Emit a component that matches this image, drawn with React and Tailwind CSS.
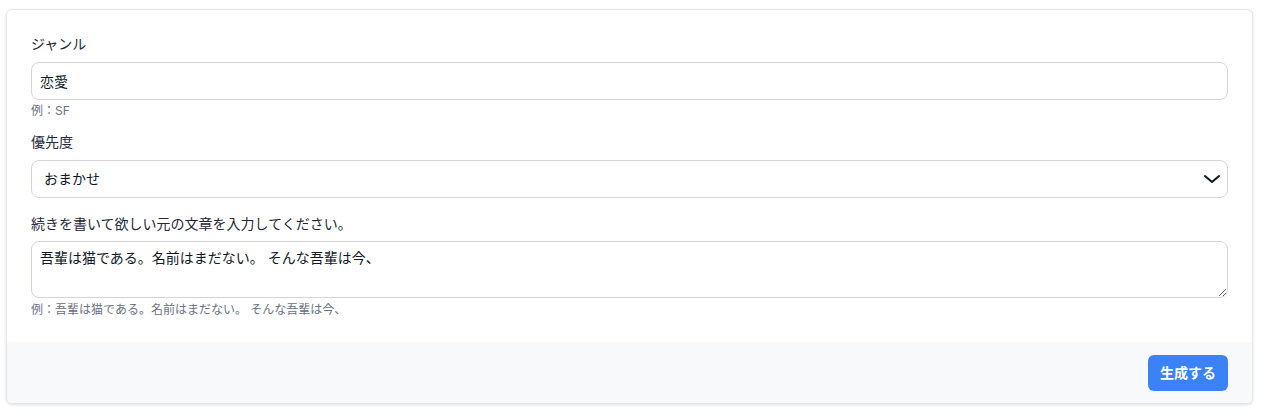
import React from "react";

const font = { fontFamily: '"Inter", "Noto Sans CJK JP", sans-serif' };

export default function App() {
  return (
    <div className="pl-[6px] pr-[13px] pt-[9px] bg-white min-h-[416px]" style={font}>
      <div className="rounded-md border border-gray-200 bg-white shadow-[0_1px_3px_rgba(0,0,0,0.12)] overflow-hidden">
        <div className="p-6 flex flex-col gap-4">
          <div>
            <label className="block h-5 text-sm leading-5 text-gray-800 mb-2">ジャンル</label>
            <input
              className="block w-full h-[38px] rounded-lg border border-[#d4d4dc] px-2 text-sm leading-5 text-gray-900 outline-none"
              defaultValue="恋愛"
              style={font}
            />
            <p className="block h-[13px] mt-[3px] text-xs leading-4 text-gray-500">例：SF</p>
          </div>
          <div>
            <label className="block h-5 text-sm leading-5 text-gray-800 mb-2">優先度</label>
            <div className="relative">
              <div className="w-full h-[38px] flex items-center rounded-lg border border-[#d4d4dc] px-3 text-sm leading-5 text-gray-900">
                おまかせ
              </div>
              <svg
                className="absolute right-[6px] top-1/2 -translate-y-1/2"
                width="20"
                height="20"
                viewBox="0 0 20 20"
                fill="none"
                stroke="#111827"
                strokeWidth="2"
                strokeLinecap="round"
                strokeLinejoin="round"
              >
                <path d="M3 7l7 6 7-6" />
              </svg>
            </div>
          </div>
          <div>
            <label className="block h-5 text-sm leading-5 text-gray-800 mb-[7px]">
              続きを書いて欲しい元の文章を入力してください。
            </label>
            <textarea
              className="block w-full h-[57px] rounded-lg border border-[#d4d4dc] px-2 pt-[6px] pb-1 text-sm leading-5 text-gray-900 outline-none"
              defaultValue="吾輩は猫である。名前はまだない。 そんな吾輩は今、"
              style={font}
            />
            <p className="block h-4 mt-1 text-xs leading-4 text-gray-500">
              例：吾輩は猫である。名前はまだない。 そんな吾輩は今、
            </p>
          </div>
        </div>
        <div className="bg-[#f8f9fa] px-6 pt-[13px] pb-3 flex justify-end">
          <button className="rounded-md bg-[#3b82f6] px-3 py-2 text-sm leading-5 font-bold text-white">
            生成する
          </button>
        </div>
      </div>
    </div>
  );
}
